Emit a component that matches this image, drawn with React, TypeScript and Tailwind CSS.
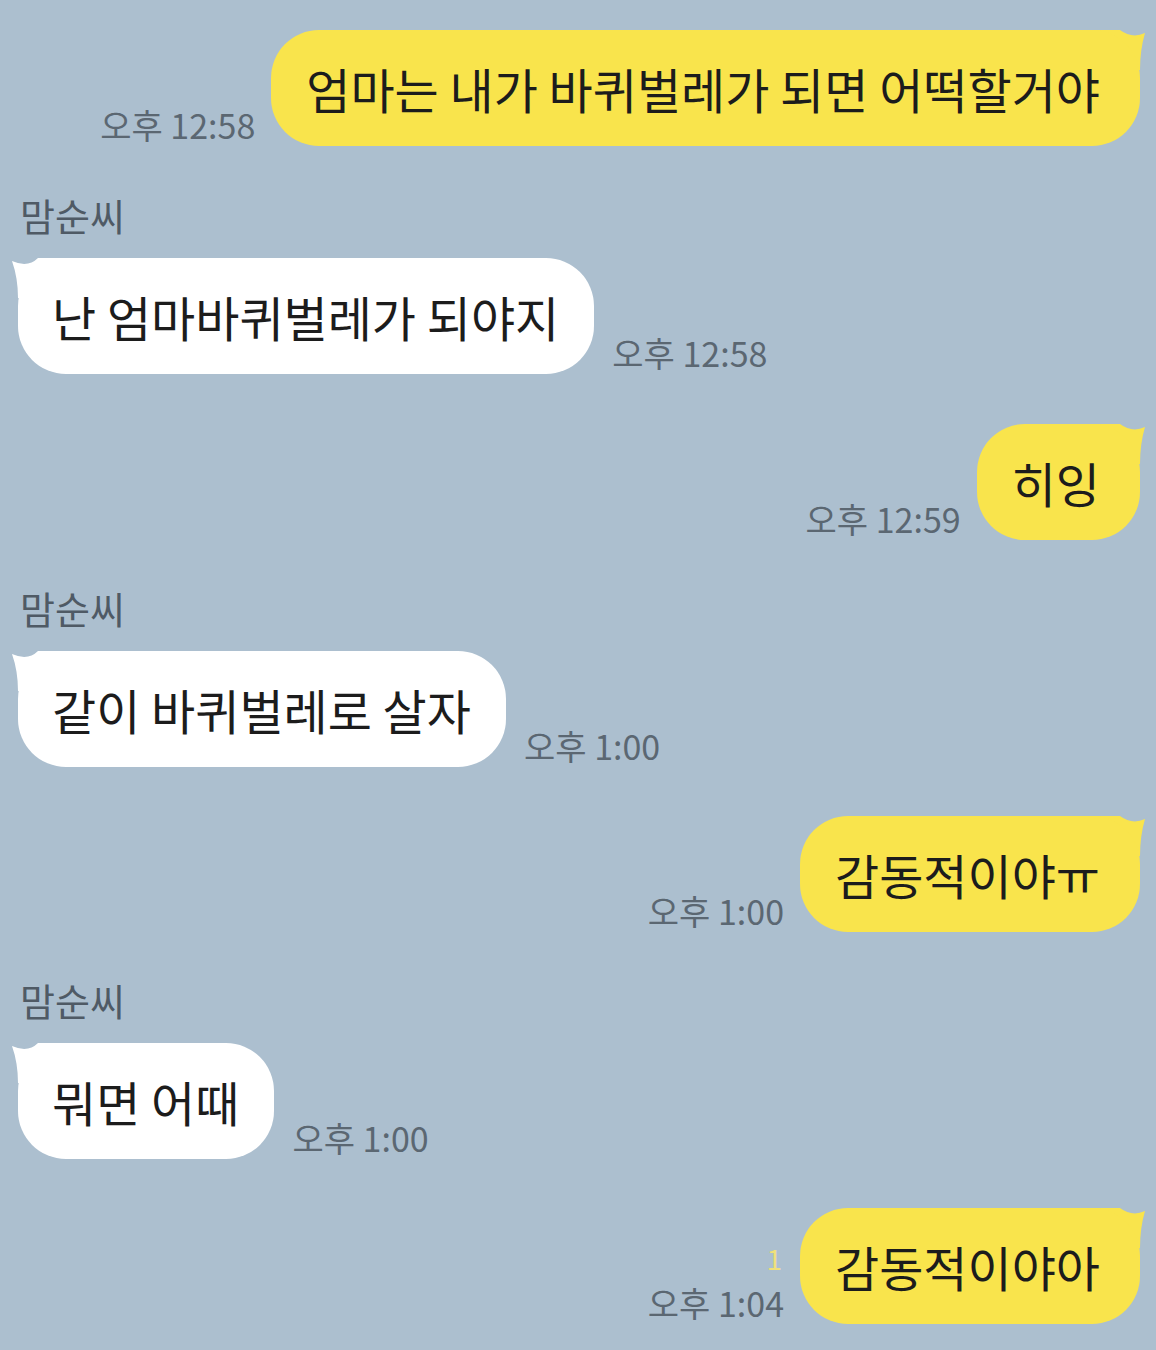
import React from "react"

const font = { fontFamily: '"Noto Sans CJK KR", "Noto Sans", sans-serif' }

function Mine({ text, time, unread }: { text: string; time: string; unread?: boolean }) {
  return (
    <div className="flex justify-end items-end pr-[16px]">
      <div className="flex flex-col items-end mr-[16px] mb-[4px] leading-none">
        {unread && <span className="text-[28px] text-[#efe07a] mb-[14px] mr-[2px]">1</span>}
        <span className="text-[34px] text-[#5b6772]">{time}</span>
      </div>
      <div className="relative">
        {/* tail, painted under the bubble text */}
        <svg className="absolute right-[-6px] top-0" width="56" height="40" viewBox="0 0 56 40">
          <path d="M0 0 L30 0 Q42 9 55 3 Q50 20 50 40 L0 40 Z" fill="#f9e44c" />
        </svg>
        <div className="relative bg-[#f9e44c] rounded-[48px] h-[116px] pl-[35px] pr-[40px] flex items-center text-[48px] text-[#1c1c1c] whitespace-nowrap">
          {text}
        </div>
      </div>
    </div>
  )
}

function Theirs({ text, time, name }: { text: string; time: string; name?: string }) {
  return (
    <div className="flex flex-col items-start pl-[18px]">
      {name && <div className="text-[38px] text-[#4f5a65] leading-none ml-[2px] mb-[24px]">{name}</div>}
      <div className="flex items-end">
        <div className="relative">
          {/* tail, painted under the bubble text */}
          <svg className="absolute left-[-8px] top-0" width="56" height="40" viewBox="0 0 56 40">
            <path d="M56 0 L28 0 Q18 10 2 3 Q8 20 8 40 L56 40 Z" fill="#ffffff" />
          </svg>
          <div className="relative bg-white rounded-[48px] h-[116px] pl-[34px] pr-[35px] flex items-center text-[48px] text-[#1c1c1c] whitespace-nowrap">
            {text}
          </div>
        </div>
        <span className="ml-[18px] mb-[4px] text-[34px] text-[#5b6772] leading-none">{time}</span>
      </div>
    </div>
  )
}

export default function App() {
  return (
    <div className="w-[1156px] h-[1350px] bg-[#acbfcf] overflow-hidden" style={font}>
      <div className="flex flex-col pt-[30px]">
        <Mine text="엄마는 내가 바퀴벌레가 되면 어떡할거야" time="오후 12:58" />
        <div className="mt-[50px]">
          <Theirs name="맘순씨" text="난 엄마바퀴벌레가 되야지" time="오후 12:58" />
        </div>
        <div className="mt-[50px]">
          <Mine text="히잉" time="오후 12:59" />
        </div>
        <div className="mt-[49px]">
          <Theirs name="맘순씨" text="같이 바퀴벌레로 살자" time="오후 1:00" />
        </div>
        <div className="mt-[49px]">
          <Mine text="감동적이야ㅠ" time="오후 1:00" />
        </div>
        <div className="mt-[49px]">
          <Theirs name="맘순씨" text="뭐면 어때" time="오후 1:00" />
        </div>
        <div className="mt-[49px]">
          <Mine text="감동적이야아" time="오후 1:04" unread />
        </div>
      </div>
    </div>
  )
}
